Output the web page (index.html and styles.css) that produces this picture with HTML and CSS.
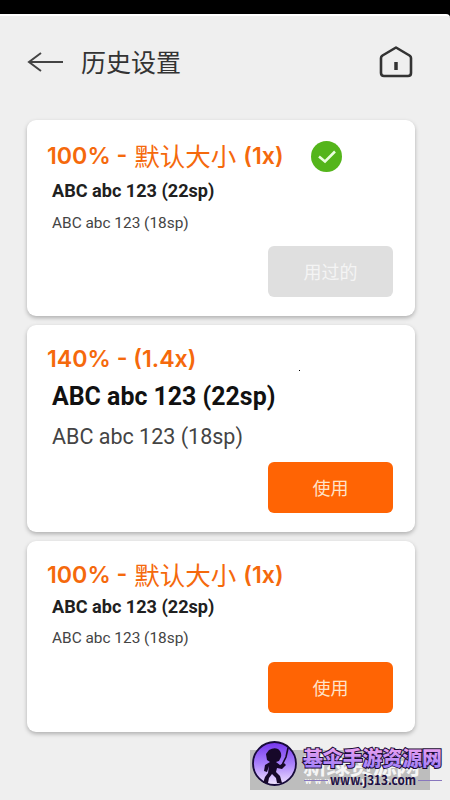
FILE: index.html
```html
<!DOCTYPE html>
<html lang="zh-CN">
<head>
<meta charset="utf-8">
<title>历史设置</title>
<link rel="stylesheet" href="styles.css">
</head>
<body>
<div class="status"></div>
<main class="screen">
  <header class="bar">
    <svg class="back" width="38" height="22" viewBox="0 0 38 22"><path d="M14 2 2 11l12 9M2 11h34"/></svg>
    <h1>历史设置</h1>
    <svg class="home" width="36" height="36" viewBox="0 0 36 36"><path d="M18 3.500 31.500 11.500Q33 12.500 33 14V29Q33 32 30 32H6Q3 32 3 29V14Q3 12.500 4.500 11.500Z"/><path class="door" d="M18 18v8"/></svg>
  </header>
  <section class="card first">
    <h2><span>100% -</span><span class="cn">默认大小</span><span class="times">(1x)</span>
      <svg class="check" width="31" height="31" viewBox="0 0 31 31"><circle cx="15.500" cy="15.500" r="15.500"/><path d="m8 15.500 6 5 10-10"/></svg>
    </h2>
    <p class="big">ABC abc 123 (22sp)</p>
    <p class="small">ABC abc 123 (18sp)</p>
    <button class="used">用过的</button>
  </section>
  <section class="card second">
    <h2><span>140% - (1.4x)</span></h2>
    <p class="big">ABC abc 123 (22sp)</p>
    <p class="small">ABC abc 123 (18sp)</p>
    <button>使用</button>
  </section>
  <section class="card third">
    <h2><span>100% -</span><span class="cn">默认大小</span><span class="times">(1x)</span></h2>
    <p class="big">ABC abc 123 (22sp)</p>
    <p class="small">ABC abc 123 (18sp)</p>
    <button>使用</button>
  </section>
</main>
<i class="dot"></i>
<svg class="mark" width="210" height="66" viewBox="0 0 210 66">
  <defs>
    <linearGradient id="disc" x2="0" y2="1"><stop stop-color="#7535ed"/><stop offset=".5" stop-color="#a980fb"/><stop offset="1" stop-color="#f2e5ff"/></linearGradient>
    <linearGradient id="name" x2="0" y2="1"><stop offset=".15" stop-color="#eda2ef"/><stop offset="1" stop-color="#9079fa"/></linearGradient>
  </defs>
  <path fill="#bdbdbd" d="M10 16h180v40H10z"/>
  <text class="under" x="63" y="40" textLength="117">新绿资源网</text>
  <text class="underurl" x="65" y="50" textLength="104">w w w . x l z y w . c o m</text>
  <circle cx="34.500" cy="29.500" r="21.500" fill="url(#disc)" stroke="#180b3b" stroke-width="1.800"/>
  <g fill="#170829">
    <path d="M29 16q5-3 9-1 4 3 3 8l-2 4-3 1 4 3 4-2 2 2-4 4-5-1-1 4 4 4 2 7h-5l-1-5-4-4-3 4-1 5h-5l2-6 3-4 1-7-2 6-3-1 1-6 5-3-3-2-1-6Z"/>
  </g>
  <path d="m48 14-2 9-5 10" fill="none" stroke="#170829" stroke-width="1.600"/>
  <text class="site" x="63" y="32" textLength="139">基伞手游资源网</text>
  <path d="M64 46.500h24M178 46.500h24" stroke="#8877bd" stroke-width="1"/>
  <text class="url" x="90" y="51" textLength="86" lengthAdjust="spacingAndGlyphs">www.j313.com</text>
</svg>
</body>
</html>
```
FILE: styles.css
```css
* { box-sizing: border-box; }
body { margin: 0; width: 450px; height: 800px; overflow: hidden; background: #000; font-family: Roboto, "Noto Sans CJK SC", sans-serif; color: #202020; }
.status { height: 14px; }
.screen { height: 786px; background: #efefef; border-top: 2px solid #fff; border-top-right-radius: 4px; padding: 0 35px 0 27px; }
.bar { height: 104px; display: flex; align-items: flex-start; padding-top: 28px; }
.back { margin-top: 7px; fill: none; stroke: #444; stroke-width: 2; }
h1 { margin: -1px 0 0 16px; font: 400 25px/36px "Noto Sans CJK SC", sans-serif; color: #333; }
.home { margin: 0 1px 0 auto; fill: none; stroke: #333; stroke-width: 2.600; stroke-linejoin: round; }
.door { stroke-width: 3.500; }
.card { display: flex; flex-direction: column; background: #fff; border-radius: 9px; box-shadow: 0 2px 4px #0004; padding: 18px 22px 0 20px; }
.first { height: 196px; margin-bottom: 9px; }
.second { height: 207px; margin-bottom: 9px; padding-top: 16px; }
.third { height: 191px; padding-top: 16px; }
h2 { margin: 0; height: 36px; display: flex; align-items: center; font: 600 23.200px/36px Inter, sans-serif; color: #f5690c; white-space: pre; }
.cn { font: 400 25.500px/34px "Noto Sans CJK SC", sans-serif; margin: -3px 0 0 7px; }
.times { margin-left: 7px; }
.check { margin-left: 27px; fill: #54b51b; }
.check path { fill: none; stroke: #eaffdf; stroke-width: 2.500; }
p { margin: 0 0 0 5px; white-space: nowrap; }
.big { font-weight: 700; font-size: 18.100px; line-height: 34px; }
.small { font-size: 15.400px; line-height: 31px; color: #444; }
.third .big { line-height: 28px; }
.third .small { line-height: 35px; }
.second .big { font-size: 24.900px; line-height: 40px; color: #111; }
.second .small { font-size: 21.500px; line-height: 40px; }
button { width: 125px; height: 51px; margin: auto 0 19px auto; border: 0; border-radius: 6px; background: #ff6404; color: #ffe3c9; font: 400 18px/51px "Noto Sans CJK SC", sans-serif; padding: 0; }
.used { background: #dfdfdf; color: #f4f4f4; }
.dot { position: absolute; left: 299px; top: 370px; width: 1px; height: 1px; background: #000; }
.mark { position: absolute; left: 240px; top: 734px; }
.under { font: 700 24px "Noto Sans CJK SC", sans-serif; fill: #f5f5f5; }
.underurl { font: 700 9px Roboto, sans-serif; fill: #f5f5f5; }
.site { font: 900 20px "Noto Sans CJK SC", sans-serif; fill: url(#name); stroke: #1b0b35; stroke-width: 2; paint-order: stroke; }
.url { font: 700 13px "Noto Sans CJK SC", sans-serif; fill: #211044; }
```
